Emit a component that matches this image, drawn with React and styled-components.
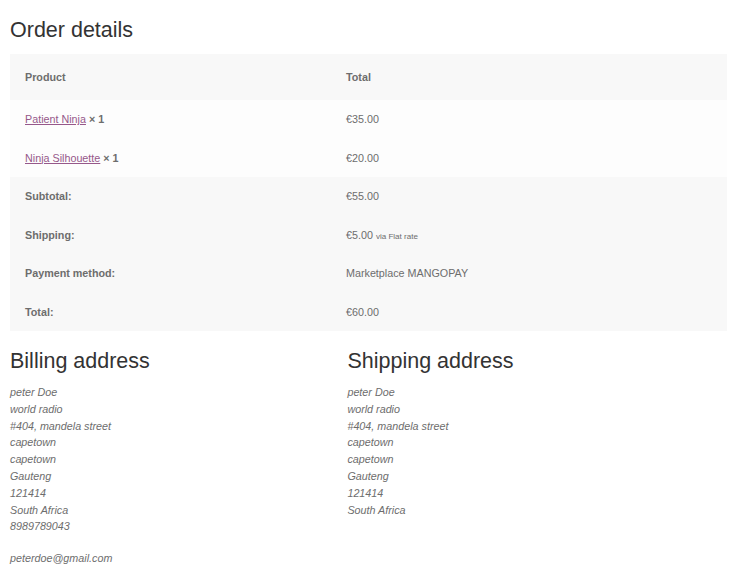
import styled, { createGlobalStyle } from "styled-components";

const GlobalStyle = createGlobalStyle`
  html, body {
    margin: 0;
    padding: 0;
    background: #ffffff;
  }

  body {
    font-family: "Liberation Sans", Arial, sans-serif;
    font-size: 10.75px;
    line-height: 1.56;
    color: #6d6d6d;
  }
`

const Page = styled.main`
  width: 717px;
  padding: 17.6px 10px 0;
`

const Heading = styled.h2`
  margin: 0 0 ${props => props.$gap || '10.6px'};
  color: #333333;
  font-size: 21.5px;
  font-weight: 400;
  line-height: 1.2;
`

const OrderTable = styled.table`
  width: 100%;
  border-collapse: collapse;
  border-spacing: 0;
  table-layout: fixed;
`

const HeadCell = styled.th`
  background-color: #f8f8f8;
  font-weight: 700;
  text-align: left;
  padding: 14.8px 15px;
  width: ${props => props.$width || 'auto'};
`

const ItemRow = styled.tr`
  background-color: #fdfdfd;
`

const Cell = styled.td`
  padding: 10.8px 15px;
  text-align: left;
  vertical-align: middle;
`

const FootRow = styled.tr`
  background-color: #f8f8f8;
`

const FootLabel = styled.th`
  padding: 10.9px 15px;
  font-weight: 700;
  text-align: left;
`

const FootValue = styled.td`
  padding: 10.9px 15px;
  text-align: left;
  line-height: 1.56;
`

const ProductLink = styled.a`
  color: #96588a;
  text-decoration: underline;
`

const Quantity = styled.strong`
  font-weight: 700;
`

const ShippedVia = styled.small`
  font-size: 0.75em;
  line-height: 1;
`

const Addresses = styled.section`
  display: grid;
  grid-template-columns: 41.18% 41.18%;
  column-gap: 5.88%;
  margin-top: 17.8px;
`

const AddressBlock = styled.div``

const Address = styled.address`
  margin: 0;
  font-style: italic;
`

const Email = styled.p`
  margin: 15px 0 0;
  font-style: italic;
`

const items = [
  { name: "Patient Ninja", qty: 1, total: "€35.00" },
  { name: "Ninja Silhouette", qty: 1, total: "€20.00" },
]

const billing = [
  "peter Doe",
  "world radio",
  "#404, mandela street",
  "capetown",
  "capetown",
  "Gauteng",
  "121414",
  "South Africa",
  "8989789043",
]

const shipping = billing.slice(0, 8)

function AddressLines({ lines }) {
  return (
    <Address>
      {lines.map((line, i) => (
        <span key={i}>
          {line}
          <br />
        </span>
      ))}
    </Address>
  )
}

export default function App() {
  return (
    <>
      <GlobalStyle />
      <Page>
        <Heading>Order details</Heading>

        <OrderTable>
          <thead>
            <tr>
              <HeadCell $width="291px">Product</HeadCell>
              <HeadCell>Total</HeadCell>
            </tr>
          </thead>
          <tbody>
            {items.map(item => (
              <ItemRow key={item.name}>
                <Cell>
                  <ProductLink href="#">{item.name}</ProductLink>{" "}
                  <Quantity>× {item.qty}</Quantity>
                </Cell>
                <Cell>{item.total}</Cell>
              </ItemRow>
            ))}
          </tbody>
          <tfoot>
            <FootRow>
              <FootLabel>Subtotal:</FootLabel>
              <FootValue>€55.00</FootValue>
            </FootRow>
            <FootRow>
              <FootLabel>Shipping:</FootLabel>
              <FootValue>
                €5.00 <ShippedVia>via Flat rate</ShippedVia>
              </FootValue>
            </FootRow>
            <FootRow>
              <FootLabel>Payment method:</FootLabel>
              <FootValue>Marketplace MANGOPAY</FootValue>
            </FootRow>
            <FootRow>
              <FootLabel>Total:</FootLabel>
              <FootValue>€60.00</FootValue>
            </FootRow>
          </tfoot>
        </OrderTable>

        <Addresses>
          <AddressBlock>
            <Heading $gap="9.3px">Billing address</Heading>
            <AddressLines lines={billing} />
            <Email>peterdoe@gmail.com</Email>
          </AddressBlock>
          <AddressBlock>
            <Heading $gap="9.3px">Shipping address</Heading>
            <AddressLines lines={shipping} />
          </AddressBlock>
        </Addresses>
      </Page>
    </>
  )
}
